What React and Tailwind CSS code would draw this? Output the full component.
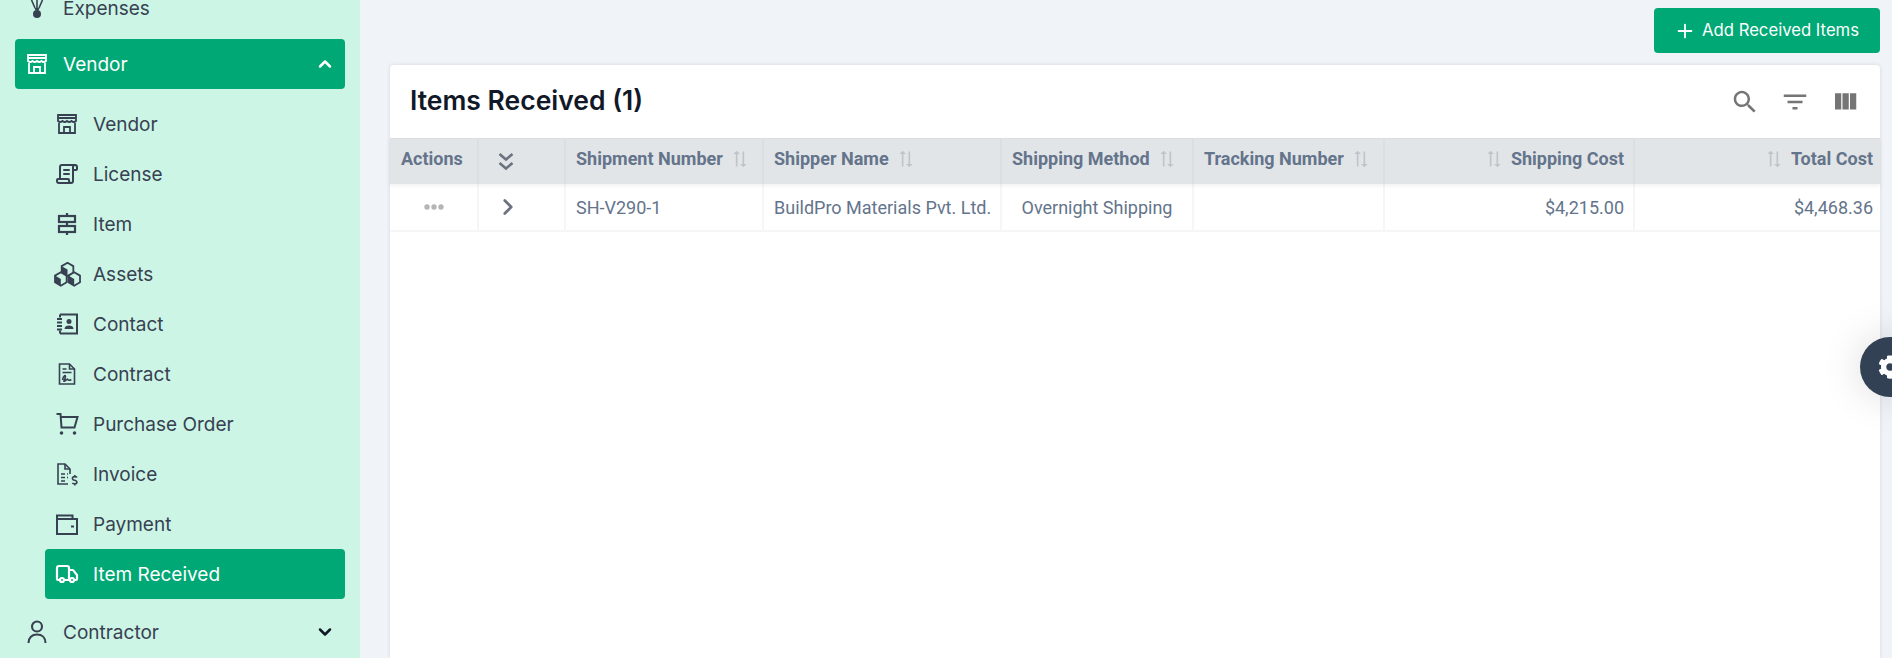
import React from 'react';
import { ScrollText, Truck, ChevronUp, ChevronDown, ChevronRight, Plus } from 'lucide-react';
import { FaCog } from 'react-icons/fa';

const Line = ({ size = 24, width = 2, children }) => (
  <svg width={size} height={size} viewBox="0 0 24 24" fill="none" stroke="currentColor" strokeWidth={width}>
    {children}
  </svg>
);

const StoreIcon = () => (
  <Line width={1.8}>
    <path d="M3 3h18v6q-2.25 2-4.5 0q-2.25 2-4.5 0q-2.25 2-4.5 0q-2.25 2-4.5 0z" />
    <path d="M3 6h18M4 11v10h16V11M9 21v-6h6v6" />
  </Line>
);

const ItemIcon = () => (
  <Line size={24} width={2.2}>
    <path d="M12 1v3M12 10v4M12 20v3" />
    <rect x="4" y="4" width="16" height="6" />
    <rect x="4" y="14" width="16" height="6" />
  </Line>
);

const Cube = ({ cx, cy, r }) => {
  const w = r * 0.87;
  const h = r * 0.5;
  return (
    <g>
      <polygon
        points={`${cx},${cy - r} ${cx + w},${cy - h} ${cx + w},${cy + h} ${cx},${cy + r} ${cx - w},${cy + h} ${cx - w},${cy - h}`}
        fill="#ccf5e6"
        stroke="currentColor"
        strokeWidth="1.6"
      />
      <polygon points={`${cx - w},${cy - h} ${cx},${cy} ${cx},${cy + r} ${cx - w},${cy + h}`} fill="currentColor" />
    </g>
  );
};

const BoxesIcon = () => (
  <svg width="29" height="27" viewBox="0 0 26 24" className="shrink-0">
    <Cube cx={13} cy={7.5} r={6} />
    <Cube cx={7} cy={16} r={6} />
    <Cube cx={19} cy={16} r={6} />
  </svg>
);

const ContactIcon = () => (
  <Line width={2}>
    <path d="M5 2.5h17v19H5M5 2.5v3M5 18.5v3" />
    <path d="M2 7h5M2 10.5h5M2 14h5M2 17.5h5" />
    <circle cx="14" cy="9.5" r="2.5" fill="currentColor" stroke="none" />
    <path d="M9.5 17c0-2.500 2-3.500 4.500-3.500s4.500 1 4.500 3.500z" fill="currentColor" stroke="none" />
  </Line>
);

const ContractIcon = () => (
  <Line width={1.6}>
    <path d="M4.500 2h10l5 5v15h-15z" />
    <path d="M14.500 2v5h5M7.500 7h4M7.500 10.500h9" />
    <path d="M7.500 18c1-5 3.500-5.500 2.800-2.500s-2.500 4.500-.5 3.500 2.500-2.500 3-1.500 2 1 3.500 0" />
  </Line>
);

const CartIcon = () => (
  <Line width={2}>
    <path d="M1.500 2H5.500L6.500 15.500H19.500L22.500 5H6" />
    <circle cx="6.500" cy="21" r="1.800" fill="currentColor" stroke="none" />
    <circle cx="19.500" cy="21" r="1.800" fill="currentColor" stroke="none" />
  </Line>
);

const InvoiceIcon = () => (
  <Line size={26} width={1.6}>
    <path d="M15 12V7l-5-5H3v20h10" />
    <path d="M10 2v5h5M6 12h4M6 15.500h4M6 19h4M12 12h1M12 15.500h1" />
    <path d="M22 15.500c-.5-1-4-1.500-4.500.300s1 2.200 2.200 2.500 2.600 1 2.200 2.500-3.900 1.200-4.500 0M19.800 13v2M19.800 21.500v2" />
  </Line>
);

const WalletIcon = () => (
  <Line width={2}>
    <path d="M2 7h20v15H2zM2 7V3.500h15.500V7" />
    <path d="M16 14.500h3" />
  </Line>
);

const PersonIcon = () => (
  <Line width={2.1}>
    <circle cx="12" cy="6.500" r="5" />
    <path d="M3.500 23c0-5.500 3.500-8.500 8.500-8.500s8.500 3 8.500 8.500" />
  </Line>
);

const ExpensesIcon = () => (
  <svg width="24" height="24" viewBox="0 0 24 24" fill="none" stroke="currentColor" strokeWidth="1.6">
    <path d="M12 4v8M6.500 4l3.500 8M17.500 4l-3.500 8" />
    <path d="M9.500 12h5l-1 2.500h-3z" fill="currentColor" stroke="none" />
    <circle cx="12" cy="18" r="4" fill="currentColor" stroke="none" />
  </svg>
);

const SUB_ITEMS = [
  { label: 'Vendor', icon: <StoreIcon /> },
  { label: 'License', icon: <ScrollText size={24} strokeWidth={2} className="-scale-x-100" /> },
  { label: 'Item', icon: <ItemIcon /> },
  { label: 'Assets', icon: <BoxesIcon /> },
  { label: 'Contact', icon: <ContactIcon /> },
  { label: 'Contract', icon: <ContractIcon /> },
  { label: 'Purchase Order', icon: <CartIcon /> },
  { label: 'Invoice', icon: <InvoiceIcon /> },
  { label: 'Payment', icon: <WalletIcon /> },
];

const Sort = () => (
  <svg width="20" height="20" viewBox="0 0 24 24" fill="#bfc4ca" className="rotate-90 shrink-0">
    <path d="m18 12 4-4-4-4v3H3v2h15zM6 12l-4 4 4 4v-3h15v-2H6z" />
  </svg>
);

const Sidebar = () => (
  <aside className="w-[360px] shrink-0 bg-[#ccf5e6] text-[#374151] text-[19px] overflow-hidden font-['Inter',sans-serif]">
    <div className="-mt-[17px]">
      <div className="h-[50px] mb-[6px] flex items-center pl-[25px]">
        <span className="w-[24px] flex justify-center"><ExpensesIcon /></span>
        <span className="ml-[14px] pt-[2px]">Expenses</span>
      </div>
      <div className="mx-[15px] h-[50px] bg-[#00a875] text-white rounded-[4px] flex items-center pl-[10px] pr-[10px]">
        <span className="w-[24px] flex justify-center"><StoreIcon /></span>
        <span className="ml-[14px] pt-[2px] flex-1">Vendor</span>
        <ChevronUp size={20} strokeWidth={3} />
      </div>
      <div className="mt-[10px] ml-[45px] mr-[15px]">
        {SUB_ITEMS.map((item) => (
          <div key={item.label} className="h-[50px] flex items-center pl-[10px]">
            <span className="w-[24px] flex justify-center">{item.icon}</span>
            <span className="ml-[14px] pt-[2px]">{item.label}</span>
          </div>
        ))}
        <div className="h-[50px] bg-[#00a875] text-white rounded-[4px] flex items-center pl-[10px]">
          <span className="w-[24px] flex justify-center"><Truck size={26} strokeWidth={2.2} /></span>
          <span className="ml-[14px] pt-[2px]">Item Received</span>
        </div>
      </div>
      <div className="mt-[8px] h-[50px] flex items-center pl-[25px] pr-[25px]">
        <span className="w-[24px] flex justify-center"><PersonIcon /></span>
        <span className="ml-[14px] pt-[2px] flex-1">Contractor</span>
        <ChevronDown size={20} strokeWidth={3} className="text-[#111827]" />
      </div>
    </div>
  </aside>
);

const Th = ({ className = '', children }) => (
  <div className={`flex items-center gap-[7px] pl-[11px] pr-[9px] pb-[6px] whitespace-nowrap border-r-2 border-[#dcdfe2] ${className}`}>{children}</div>
);

const Td = ({ className = '', children }) => (
  <div className={`flex items-center pl-[11px] pr-[9px] whitespace-nowrap border-r-2 border-[#f5f6f7] ${className}`}>{children}</div>
);

const Table = () => (
  <div className="font-['Roboto',sans-serif] text-[18px]">
    <div className="flex h-[46px] bg-[#e2e5e8] border-t border-[#dcdfe2] font-bold text-[#64748b] shadow-[0_2px_4px_rgba(0,0,0,0.06)] relative">
      <Th className="w-[89px] shrink-0">Actions</Th>
      <Th className="w-[87px] shrink-0 !pl-[18px] !pb-0">
        <svg width="18" height="20" viewBox="0 0 18 20" fill="none" stroke="#6b7280" strokeWidth="2.6">
          <path d="M2.500 2l6.500 5.500L15.500 2M2.500 11l6.500 5.500L15.500 11" />
        </svg>
      </Th>
      <Th className="w-[198px] shrink-0 !pl-[10px]">Shipment Number <Sort /></Th>
      <Th className="w-[238px] shrink-0 !pl-[10px]">Shipper Name <Sort /></Th>
      <Th className="w-[192px] shrink-0 !pl-[10px]">Shipping Method <Sort /></Th>
      <Th className="w-[191px] shrink-0 !pl-[10px]">Tracking Number <Sort /></Th>
      <Th className="w-[250px] shrink-0 justify-end"><Sort /> Shipping Cost</Th>
      <div className="flex-1 flex items-center justify-end gap-[7px] pb-[6px] pr-[7px] whitespace-nowrap"><Sort /> Total Cost</div>
    </div>
    <div className="flex h-[48px] border-b-2 border-[#f5f6f7] text-[#64748b]">
      <Td className="w-[89px] shrink-0 justify-center !pl-0 !pr-0">
        <svg width="20" height="6" viewBox="0 0 20 6" fill="#b5b5b5">
          <circle cx="3" cy="3" r="2.700" />
          <circle cx="10" cy="3" r="2.700" />
          <circle cx="17" cy="3" r="2.700" />
        </svg>
      </Td>
      <Td className="w-[87px] shrink-0 !pl-[16px]"><ChevronRight size={26} strokeWidth={2.5} className="text-[#6b7280]" /></Td>
      <Td className="w-[198px] shrink-0 !pl-[10px]">SH-V290-1</Td>
      <Td className="w-[238px] shrink-0 !pl-[10px]">BuildPro Materials Pvt. Ltd.</Td>
      <Td className="w-[192px] shrink-0 justify-center !pl-0 !pr-0">Overnight Shipping</Td>
      <Td className="w-[191px] shrink-0"></Td>
      <Td className="w-[250px] shrink-0 justify-end">$4,215.00</Td>
      <div className="flex-1 flex items-center justify-end pr-[7px]">$4,468.36</div>
    </div>
  </div>
);

export default function App() {
  return (
    <div className="relative flex h-[658px] overflow-hidden bg-[#f0f4f8]">
      <Sidebar />
      <main className="flex-1 flex flex-col pt-[8px] pl-[30px] pr-[12px]">
        <div className="flex justify-end">
          <button className="h-[45px] w-[226px] bg-[#00a875] text-white rounded-[4px] flex items-center pl-[20px] gap-[6px] text-[16.7px] whitespace-nowrap font-['Inter',sans-serif]">
            <Plus size={22} />
            <span className="pt-[1px]">Add Received Items</span>
          </button>
        </div>
        <section className="mt-[12px] flex-1 bg-white rounded-t-[4px] shadow-[0_0_4px_rgba(0,0,0,0.12)]">
          <div className="h-[73px] flex items-center justify-between pl-[20px] pr-[20px]">
            <h1 className="text-[26.5px] font-semibold text-[#111827] pb-[2px] font-['Inter',sans-serif]">Items Received (1)</h1>
            <div className="flex items-center gap-[20px] text-[#757575]">
              <svg width="30" height="30" viewBox="0 0 24 24" fill="currentColor">
                <path d="M15.500 14h-.79l-.28-.27C15.410 12.590 16 11.110 16 9.500 16 5.910 13.090 3 9.500 3S3 5.910 3 9.500 5.910 16 9.500 16c1.610 0 3.090-.59 4.230-1.570l.27.28v.79l5 4.990L20.490 19l-4.990-5zm-6 0C7.010 14 5 11.990 5 9.500S7.010 5 9.500 5 14 7.010 14 9.500 11.990 14 9.500 14z" />
              </svg>
              <svg width="30" height="30" viewBox="0 0 24 24" fill="currentColor">
                <path d="M10 18h4v-2h-4v2zM3 6v2h18V6H3zm3 7h12v-2H6v2z" />
              </svg>
              <svg width="30" height="30" viewBox="0 0 24 24" fill="currentColor">
                <path d="M10 18h5V5h-5v13zm-6 0h5V5H4v13zM16 5v13h5V5h-5z" />
              </svg>
            </div>
          </div>
          <Table />
        </section>
      </main>
      <div className="absolute left-[1860px] top-[337px] w-[60px] h-[60px] rounded-full bg-[#334155] flex items-center pl-[18px] text-white shadow-[0_0_40px_rgba(0,0,0,0.15)]">
        <FaCog size={24} />
      </div>
    </div>
  );
}
